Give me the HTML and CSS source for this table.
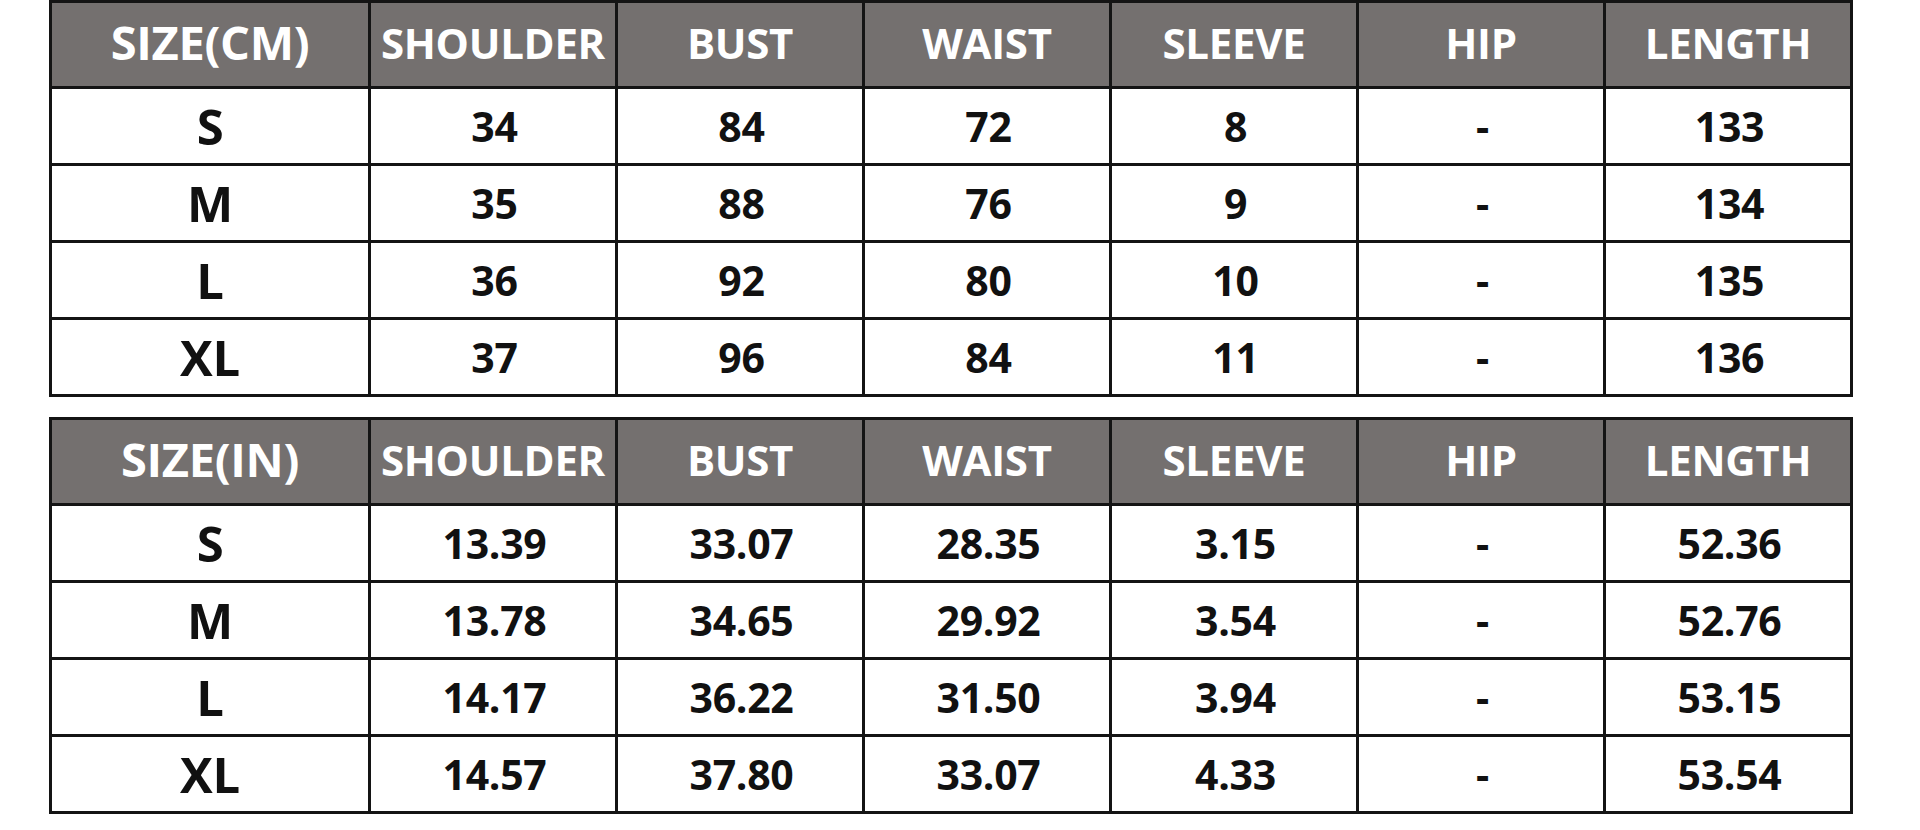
FILE: index.html
```html
<!DOCTYPE html>
<html lang="en">
<head>
<meta charset="utf-8">
<title>Size Chart</title>
<link rel="stylesheet" href="styles.css">
</head>
<body>
<div class="page">
  <table class="chart">
    <colgroup>
      <col class="c-size"><col class="c-val"><col class="c-val"><col class="c-val"><col class="c-val"><col class="c-val"><col class="c-val">
    </colgroup>
    <thead>
      <tr><th>SIZE(CM)</th><th>SHOULDER</th><th>BUST</th><th>WAIST</th><th>SLEEVE</th><th>HIP</th><th>LENGTH</th></tr>
    </thead>
    <tbody>
      <tr><td>S</td><td>34</td><td>84</td><td>72</td><td>8</td><td>-</td><td>133</td></tr>
      <tr><td>M</td><td>35</td><td>88</td><td>76</td><td>9</td><td>-</td><td>134</td></tr>
      <tr><td>L</td><td>36</td><td>92</td><td>80</td><td>10</td><td>-</td><td>135</td></tr>
      <tr><td>XL</td><td>37</td><td>96</td><td>84</td><td>11</td><td>-</td><td>136</td></tr>
    </tbody>
  </table>
  <table class="chart">
    <colgroup>
      <col class="c-size"><col class="c-val"><col class="c-val"><col class="c-val"><col class="c-val"><col class="c-val"><col class="c-val">
    </colgroup>
    <thead>
      <tr><th>SIZE(IN)</th><th>SHOULDER</th><th>BUST</th><th>WAIST</th><th>SLEEVE</th><th>HIP</th><th>LENGTH</th></tr>
    </thead>
    <tbody>
      <tr><td>S</td><td>13.39</td><td>33.07</td><td>28.35</td><td>3.15</td><td>-</td><td>52.36</td></tr>
      <tr><td>M</td><td>13.78</td><td>34.65</td><td>29.92</td><td>3.54</td><td>-</td><td>52.76</td></tr>
      <tr><td>L</td><td>14.17</td><td>36.22</td><td>31.50</td><td>3.94</td><td>-</td><td>53.15</td></tr>
      <tr><td>XL</td><td>14.57</td><td>37.80</td><td>33.07</td><td>4.33</td><td>-</td><td>53.54</td></tr>
    </tbody>
  </table>
</div>
</body>
</html>
```

FILE: styles.css
```css
html, body {
  margin: 0;
  padding: 0;
  background: #ffffff;
}

.page {
  display: flex;
  flex-direction: column;
  gap: 20px;
  padding: 0 0 0 49px;
  font-family: "Open Sans", "Noto Sans", "DejaVu Sans", sans-serif;
}

.chart {
  border-collapse: collapse;
  table-layout: fixed;
  width: 1802px;
}

.c-size { width: 319px; }
.c-val { width: 247px; }

.chart th,
.chart td {
  border: 3px solid #141414;
  padding: 0;
  text-align: center;
  vertical-align: middle;
  font-weight: 700;
  line-height: 1;
  white-space: nowrap;
}

.chart th {
  background: #74706f;
  color: #ffffff;
  font-size: 42px;
  height: 79px;
  padding-bottom: 4px;
  letter-spacing: -0.3px;
}

.chart th:first-child {
  font-size: 47px;
}

.chart td {
  color: #111111;
  font-size: 41px;
  height: 74px;
  padding-left: 3px;
  letter-spacing: -0.3px;
}

.chart td:first-child {
  font-size: 49px;
  padding-left: 0;
}
```
